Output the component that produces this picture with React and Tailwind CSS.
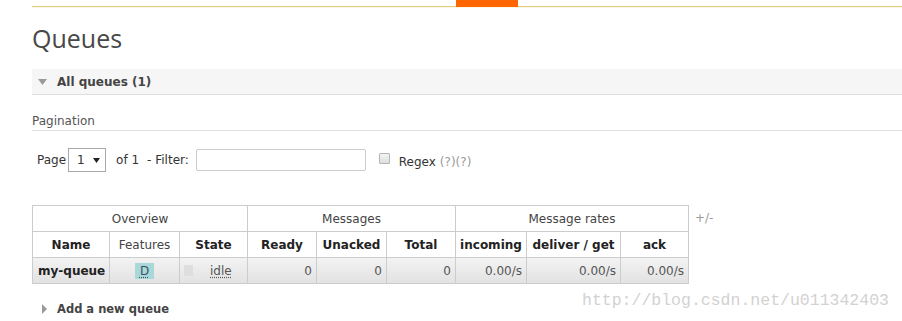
import React from "react";

const cols = "grid-cols-[77px_70px_68px_69px_70px_69px_71px_94px_68px]";

function HeadCell({ children, bold = true }) {
  return (
    <div
      className={`h-[26px] flex items-center justify-center border-r border-b border-[#cccccc] bg-white ${
        bold ? "font-bold text-[#222]" : "text-[#444]"
      }`}
    >
      {children}
    </div>
  );
}

function DataCell({ children, className = "" }) {
  return (
    <div
      className={`h-[26px] flex items-center border-r border-b border-[#cccccc] bg-linear-to-b from-[#f3f3f3] to-[#e2e2e2] ${className}`}
    >
      {children}
    </div>
  );
}

export default function App() {
  return (
    <div className="relative w-[902px] h-[321px] overflow-hidden bg-white text-[12px] text-[#444] font-['DejaVu_Sans',sans-serif] leading-[16px]">
      {/* top bar */}
      <div className="flex pl-[32px] h-[7px]">
        <div className="w-[424px] border-b border-[#e2cd7c]" />
        <div className="w-[62px] bg-[#ff6600]" />
        <div className="flex-1 border-b border-[#e2cd7c]" />
      </div>
      <div className="ml-[32px] h-[1px] bg-[#fcf6e3]" />

      <div className="pl-[32px]">
        <h1 className="mt-[15px] h-[30px] text-[25px] leading-[30px] text-[#484848] font-['Open_Sans',sans-serif]">
          Queues
        </h1>

        {/* All queues bar */}
        <div className="mt-[16px] h-[26px] bg-[#f6f6f6] border-b border-[#dddddd] flex items-center">
          <svg width="9" height="6" viewBox="0 0 9 6" className="ml-[6px]">
            <polygon points="0,0 9,0 4.5,6" fill="#9a9a9a" />
          </svg>
          <span className="ml-[10px] font-bold text-[#444]">All queues (1)</span>
        </div>

        {/* Pagination */}
        <div className="mt-[17px] h-[19px] pt-[1px] border-b border-[#e2e2e2] text-[#555]">
          Pagination
        </div>

        {/* controls */}
        <div className="mt-[17px] h-[24px] flex items-center pl-[5px] text-[#333]">
          <span>Page</span>
          <div className="ml-[2px] w-[38px] h-[24px] border border-[#a9a9a9] flex items-center pl-[8px] text-[#333]">
            <span>1</span>
            <svg width="7" height="5" viewBox="0 0 7 5" className="ml-[8px] mt-[1px]">
              <polygon points="0,0 7,0 3.5,5" fill="#222" />
            </svg>
          </div>
          <span className="ml-[10px]">of 1</span>
          <span className="ml-[8px]">- Filter:</span>
          <div className="ml-[7px] w-[170px] h-[22px] border border-[#cccccc] rounded-[2px] bg-white" />
          <div className="ml-[13px] mb-[3px] w-[11px] h-[11px] border border-[#b5b5b5] bg-linear-to-b from-[#f4f4f4] to-[#dedede] rounded-[1px]" />
          <span className="ml-[9px] mt-[4px]">Regex</span>
          <span className="ml-[4px] mt-[4px] text-[#9a9a9a]">(?)(?)</span>
        </div>

        {/* table */}
        <div className="mt-[33px] flex items-start">
          <div className={`grid ${cols} border-l border-t border-[#cccccc] w-[657px]`}>
            <div className="col-span-3 h-[26px] flex items-center justify-center border-r border-b border-[#cccccc] text-[#444]">
              Overview
            </div>
            <div className="col-span-3 h-[26px] flex items-center justify-center border-r border-b border-[#cccccc] text-[#444]">
              Messages
            </div>
            <div className="col-span-3 h-[26px] flex items-center justify-center border-r border-b border-[#cccccc] text-[#444]">
              Message rates
            </div>

            <HeadCell>Name</HeadCell>
            <HeadCell bold={false}>Features</HeadCell>
            <HeadCell>State</HeadCell>
            <HeadCell>Ready</HeadCell>
            <HeadCell>Unacked</HeadCell>
            <HeadCell>Total</HeadCell>
            <HeadCell>incoming</HeadCell>
            <HeadCell>deliver / get</HeadCell>
            <HeadCell>ack</HeadCell>

            <DataCell className="pl-[5px] font-bold text-[#222]">my-queue</DataCell>
            <DataCell className="justify-center">
              <span className="w-[19px] h-[16px] bg-[#a8d8d8] flex items-center justify-center text-[#3c5466] underline decoration-dotted underline-offset-2">
                D
              </span>
            </DataCell>
            <DataCell className="pl-[4px]">
              <span className="w-[9px] h-[11px] bg-[#dedede]" />
              <span className="ml-[17px] text-[#555] underline decoration-dotted underline-offset-2">idle</span>
            </DataCell>
            <DataCell className="justify-end pr-[4px] text-[#555]">0</DataCell>
            <DataCell className="justify-end pr-[4px] text-[#555]">0</DataCell>
            <DataCell className="justify-end pr-[4px] text-[#555]">0</DataCell>
            <DataCell className="justify-end pr-[4px] text-[#555]">0.00/s</DataCell>
            <DataCell className="justify-end pr-[4px] text-[#555]">0.00/s</DataCell>
            <DataCell className="justify-end pr-[4px] text-[#555]">0.00/s</DataCell>
          </div>
          <span className="ml-[6px] mt-[5px] text-[#9a9a9a]">+/-</span>
        </div>

        {/* Add a new queue */}
        <div className="mt-[17px] h-[16px] flex items-center">
          <svg width="5" height="10" viewBox="0 0 5 10" className="ml-[10px]">
            <polygon points="0,0 5,5 0,10" fill="#9a9a9a" />
          </svg>
          <span className="ml-[10px] text-[11.5px] font-bold text-[#444]">Add a new queue</span>
        </div>
      </div>

      {/* watermark */}
      <div className="absolute left-[582px] top-[293px] text-[16.5px] leading-[16.5px] text-[#d2d2d2] font-['Liberation_Mono',monospace] whitespace-nowrap">
        http://blog.csdn.net/u011342403
      </div>
    </div>
  );
}
